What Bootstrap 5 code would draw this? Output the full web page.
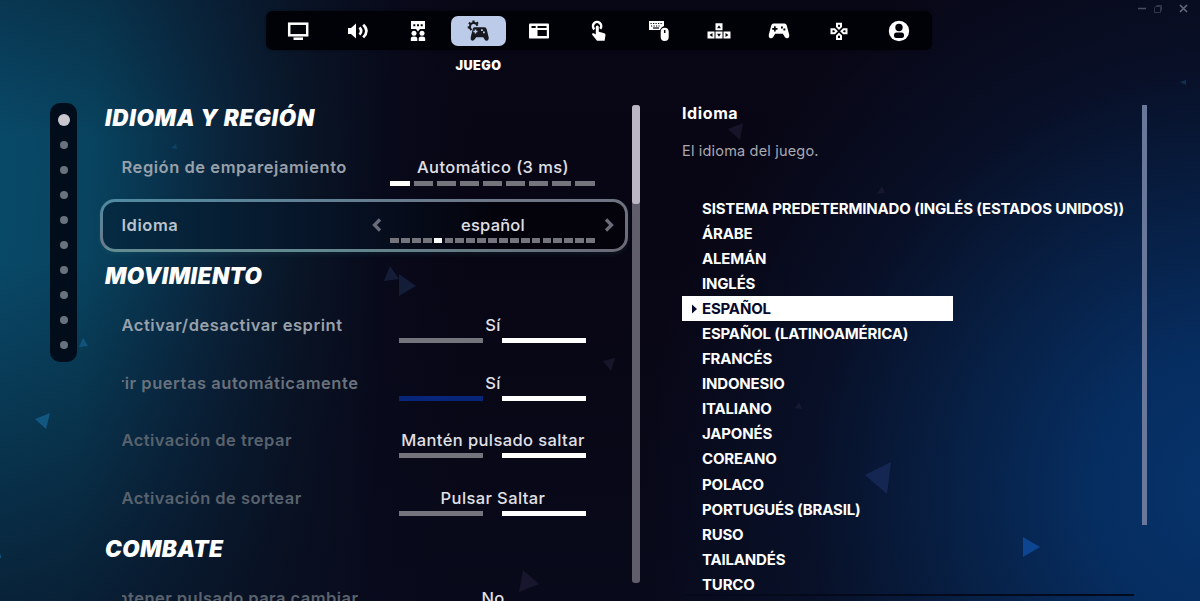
<!DOCTYPE html>
<html lang="es">
<head>
<meta charset="utf-8">
<meta name="viewport" content="width=device-width, initial-scale=1">
<title>Ajustes del juego</title>
<link href="https://cdn.jsdelivr.net/npm/bootstrap@5.3.0/dist/css/bootstrap.min.css" rel="stylesheet">
<style>
html{overflow:hidden}
body{font-family:Inter,"Noto Sans",sans-serif;height:601px;overflow:hidden;color:#fff;
 background:
 radial-gradient(ellipse 560px 570px at 1230px 490px,#06346c 0%,rgba(6,48,102,.92) 25%,rgba(7,40,85,.72) 50%,rgba(8,24,56,.5) 75%,rgba(8,6,20,0) 105%),
 linear-gradient(180deg,rgba(8,10,26,.3) 0,rgba(8,10,26,0) 23%,rgba(8,10,26,0) 43%,rgba(8,12,30,.62) 100%),
 linear-gradient(93deg,#084a69 0,#08435f 100px,#09304a 180px,#0a2036 250px,#091425 320px,#08091a 400px,#080614 480px)}
.shards{left:0;top:0;z-index:0}
.window-ctl{right:11px;top:3px}
.topbar{width:666px;height:39px;margin-top:11px;margin-left:266px;padding:0 0 0 2px;background:#010208;border-radius:7px;box-shadow:0 0 3px rgba(1,2,8,.5)}
.topbar .tab{width:60.15px;height:30px;flex:none}
.tab.on span{width:55px;height:30px;border-radius:7px;background:#bccbe8}
.tab-title{width:120px;margin-left:418.5px;height:30px;font-size:12.6px;font-weight:900;line-height:32px;letter-spacing:.5px}
.content{height:520px;margin-top:10px}
.dots{width:27px;height:259px;margin:13px 0 0 50px;border-radius:10px;background:#020d1c;padding:4px 0}
.dots div{height:25.1px}
.dots i{width:8px;height:8px;border-radius:50%;background:#67727d}
.dots .now{width:12px;height:12px;background:#c9c7ce}
.panel-l{width:527px;margin:7px 0 0 24px}
.grp{height:42px;line-height:43.4px;padding-left:4px;font-size:22.4px;font-weight:900;font-style:italic;letter-spacing:.42px}
.grp.wide{letter-spacing:.73px;line-height:42.4px}
.opt{height:57.7px;padding-left:20.5px}
.lbl{width:237px;font-size:16.5px;font-weight:600;color:#98a0aa;overflow:hidden;white-space:nowrap;letter-spacing:.54px}
.dim1{color:#68717c}.dim2{color:#59626d;letter-spacing:.46px}
.val{width:220px;margin-left:24.5px;height:100%;font-size:16.5px;font-weight:500;color:#e0e0e6;white-space:nowrap;letter-spacing:.4px}
.bars{bottom:11px;left:-.5px;right:.5px;height:5px}
.bars b{height:5px;background:#74747d}
.bars .hit{background:#fff}
.two b{width:84px}.two{gap:19.5px}
.nine b{width:19.3px}.nine{gap:3.8px}
.many b{width:8.8px}.many{gap:2.1px}
.bars .changed{background:#07267a}
.picked{border:3px solid transparent;height:53px;margin:2.2px 0 2.5px -1px;border-radius:15px;padding-left:18.5px;
 background:linear-gradient(90deg,#052b43,#071225 45%,#04030c 75%) padding-box,
 linear-gradient(172deg,#4f8ba2,#6f7787 45%,#6b6976 100%) border-box;box-shadow:0 2px 5px rgba(60,140,140,.14)}
.picked:after{content:"";position:absolute;inset:-3px;border-radius:15px;border:3px solid transparent;border-bottom-color:rgba(85,165,160,.45);-webkit-mask:linear-gradient(90deg,#000 40%,transparent);mask:linear-gradient(90deg,#000 40%,transparent)}
.picked .lbl{color:#b9c4cf}
.picked .val{letter-spacing:.2px}
.picked .bars{bottom:5.7px}
.arrow{top:16.500px}
.arrow.l{left:-12px}.arrow.r{right:-12px}
.scroll-l{width:8.5px;height:478px;margin:15px 0 0 3.5px;background:#605e6b;border-radius:3px}
.scroll-l div{height:99px;background:#bab6c2;border-radius:3px}
.panel-r{width:452px;margin:10px 0 0 42px}
.r-title{font-size:16px;font-weight:700;line-height:26px;letter-spacing:.6px}
.r-text{font-size:14.5px;color:#a9a9b1;line-height:22px;margin-top:13.8px;letter-spacing:.18px}
.langs{margin-top:34.2px;font-size:15px;font-weight:700;line-height:25.05px;letter-spacing:-.18px}
.langs li{height:25.05px;padding-left:20px;white-space:nowrap}
.langs .sel{width:270.5px;background:#fff;color:#07092c}
.sel svg{left:9px;top:7.5px}
.rule{height:2px;background:#040a1c;margin-top:-3px}
.scroll-r{width:4.5px;height:420px;margin:15px 0 0 8px;background:#68779a}
</style>
</head>
<body>
<svg class="shards position-absolute" width="1200" height="601">
 <g fill="#14608d">
  <path d="M35 419l15-6-4 16z" opacity=".8"/><path d="M83 338l5 8-9 1z" opacity=".7"/><path d="M176 144l1 5-6-1z" opacity=".4"/>
 </g>
 <g fill="#1d2c4c" opacity=".75"><path d="M390 266l9 13-15 2z" opacity=".8"/><path d="M399 274l17 12-17 10z" opacity=".8"/></g>
 <g fill="#24213d" opacity=".55"><path d="M523 570l16 14-20 8z"/><path d="M603 361l12-3-4 13z"/><path d="M728 129l15-6-3 17z"/><path d="M882 186l3 7-8 1z"/><path d="M799 402l3 7-7-1z"/></g>
 <path d="M865 475l26-13-4 32z" fill="#1a2b5c" opacity=".75"/>
 <path d="M1023 537l17 10-17 10z" fill="#0e4590"/>
 <path d="M0 553l1 5H0z" fill="#14608d"/><path d="M1180 82l6-2v5z" fill="#12304f"/>
</svg>
<svg class="window-ctl position-absolute" width="51" height="12" fill="none" stroke="#4b4d60"><path d="M0 5.500h8" stroke-width="1.500"/><path d="M17.500 3.500h5v6h-6v-5zM18.500 2.500h5v5" stroke="#34364b"/><path d="M42 2l7 7m0-7l-7 7" stroke="#65677a" stroke-width="1.700"/></svg>

<nav class="topbar d-flex align-items-center position-relative">
 <div class="tab d-flex justify-content-center align-items-center"><svg width="24" height="24" fill="none" stroke="#fff"><rect x="3.200" y="4.700" width="18" height="11.600" stroke-width="2.500"/><path d="M7.500 19.700h9.500" stroke-width="2.600"/></svg></div>
 <div class="tab d-flex justify-content-center align-items-center"><svg width="24" height="24" fill="#fff"><path d="M2 9h3l5-4.500v15L5 15H2z"/><path d="M13.500 8.500q3.300 3.500 0 7.200M17.200 5.800q6.500 6.200 0 12.600" fill="none" stroke="#fff" stroke-width="2.700"/></svg></div>
 <div class="tab d-flex justify-content-center align-items-center"><svg width="24" height="24" fill="#fff"><path fill-rule="evenodd" d="M5 2h14v8h-5l-2 2.500L10 10H5zM7.300 5.200v2h2v-2zM11 5.200v2h2v-2zM14.700 5.200v2h2v-2z"/><circle cx="8" cy="14.300" r="2.500"/><circle cx="16" cy="14.300" r="2.500"/><path d="M4.800 22v-2.500q0-2 3.200-2t3.300 2V22zM12.700 22v-2.500q0-2 3.200-2t3.300 2V22z"/></svg></div>
 <div class="tab on d-flex justify-content-center align-items-center"><span class="d-flex justify-content-center align-items-center"><svg width="24" height="24" fill="#17181f"><path d="M5.300 11.200L3.700 8.300l1-3.100 2.800-1.500 2.800 1 1.200 2" fill="none" stroke="#17181f" stroke-width="2"/><path d="M3.700 8.300l-2 .2M4.700 5.200L3 3.600M7.500 3.700V1.500M10.300 4.700l1.700-1.500" stroke="#17181f" stroke-width="2.200"/><path fill-rule="evenodd" d="M8.500 8.300h10q1.700.2 2.200 2l2 8.200q.2 3-2 3.200-1.500 0-2.200-1.500l-1.300-2h-7l-1.500 2q-1 1.700-2.500 1.400-2-.5-1.500-3.400l2-8q.5-1.800 1.800-1.900zM8.700 10.500v1.300H7.400v1.500h1.300v1.300h1.500v-1.300h1.300v-1.500h-1.300v-1.300zM15 10.300v1.800h1.800v-1.800zM17 12.500v1.800h1.800v-1.800z"/></svg></span></div>
 <div class="tab d-flex justify-content-center align-items-center"><svg width="24" height="24"><rect x="2" y="4.500" width="20" height="15" rx="1" fill="#fff"/><path d="M4.500 7h4.200v2H4.500zM10.500 7h9v2h-9zM10.500 11h9.300v6h-9.300z" fill="#010208"/></svg></div>
 <div class="tab d-flex justify-content-center align-items-center"><svg width="24" height="24"><path d="M7.400 10.200a4.100 4.100 0 1 1 5.800-.4" fill="none" stroke="#fff" stroke-width="2.500"/><path d="M8.800 8q0-1.500 1.500-1.500T11.800 8v4.800l5.500 1.400q1.300.4 1.200 1.800l-.9 5.800H10l-4.800-6q-.7-1.200.5-1.600 1.300-.2 3.100 1.300z" fill="#fff"/></svg></div>
 <div class="tab d-flex justify-content-center align-items-center"><svg width="24" height="24"><path d="M2 2h15v5q-3 1-4 4H2z" fill="#fff"/><path d="M3.500 4.500h12M4 7h9" stroke="#010208" stroke-width="1.200" stroke-dasharray="1.200 1.300"/><path d="M6 9h6" stroke="#010208" stroke-width="1.200"/><rect x="13.700" y="8.700" width="8" height="13.300" rx="4" fill="#fff"/><path d="M17.700 11v3" stroke="#010208" stroke-width="1.500"/></svg></div>
 <div class="tab d-flex justify-content-center align-items-center"><svg width="24" height="24"><path d="M8.500 4.300h7v7h-7zM.500 12.500h7v7h-7zM8.500 12.500h7v7h-7zM16.500 12.500h7v7h-7z" fill="#fff"/><path d="M12 6.300l1.900 3h-3.800zM12 17.800l1.900-3h-3.800zM2.500 16l3-1.900v3.800zM21.500 16l-3-1.900v3.800z" fill="#010208"/></svg></div>
 <div class="tab d-flex justify-content-center align-items-center"><svg width="24" height="24"><path fill="#fff" fill-rule="evenodd" d="M6.500 4.500h11q1.700 0 2.200 1.800l2.500 9.500q.5 3.300-2.200 3.500-1.500 0-2.200-1.300l-2-3.200H8.200l-2 3.200q-1 1.500-2.500 1.300-2.300-.3-1.900-3.500l2.500-9.500q.5-1.800 2.200-1.800zM7 7.200V9H5.200v1.700H7v1.800h1.700v-1.800h1.800V9H8.700V7.200zM14 7.500v1.900h1.900V7.500zM16.400 9.500v1.900h1.900V9.500z"/></svg></div>
 <div class="tab d-flex justify-content-center align-items-center"><svg width="24" height="24" fill="none" stroke="#fff" stroke-width="2"><path d="M10 4.700h4v3l-2 2-2-2zM10 19.900h4v-3l-2-2-2 2zM4.500 10.300v4h3l2-2-2-2zM19.500 10.300v4h-3l-2-2 2-2z"/></svg></div>
 <div class="tab d-flex justify-content-center align-items-center"><svg width="24" height="24"><circle cx="12" cy="12" r="10.200" fill="#fff"/><circle cx="12" cy="8.500" r="3.700" fill="#010208"/><rect x="7" y="13.500" width="10" height="5.500" rx="2.500" fill="#010208"/></svg></div>
</nav>
<div class="tab-title text-center position-relative">JUEGO</div>

<main class="content d-flex align-items-start position-relative">
 <div class="dots">
  <div class="d-flex justify-content-center align-items-center"><i class="now"></i></div>
  <div class="d-flex justify-content-center align-items-center"><i></i></div><div class="d-flex justify-content-center align-items-center"><i></i></div><div class="d-flex justify-content-center align-items-center"><i></i></div><div class="d-flex justify-content-center align-items-center"><i></i></div><div class="d-flex justify-content-center align-items-center"><i></i></div><div class="d-flex justify-content-center align-items-center"><i></i></div><div class="d-flex justify-content-center align-items-center"><i></i></div><div class="d-flex justify-content-center align-items-center"><i></i></div><div class="d-flex justify-content-center align-items-center"><i></i></div>
 </div>

 <section class="panel-l">
  <div class="grp wide">IDIOMA Y REGIÓN</div>
  <div class="opt d-flex align-items-center"><div class="lbl">Región de emparejamiento</div>
   <div class="val position-relative d-flex align-items-center justify-content-center"><span>Automático (3 ms)</span><div class="bars nine position-absolute d-flex justify-content-center"><b class="hit"></b><b></b><b></b><b></b><b></b><b></b><b></b><b></b><b></b></div></div></div>
  <div class="opt picked position-relative d-flex align-items-center"><div class="lbl">Idioma</div>
   <div class="val position-relative d-flex align-items-center justify-content-center"><svg class="arrow l position-absolute" width="12" height="14" fill="none" stroke="#6a6c79" stroke-width="3.200"><path d="M9 1.500L3.500 7 9 12.500"/></svg><span>español</span><svg class="arrow r position-absolute" width="12" height="14" fill="none" stroke="#6a6c79" stroke-width="3.200"><path d="M3 1.500L8.500 7 3 12.500"/></svg><div class="bars many position-absolute d-flex justify-content-center"><b></b><b></b><b></b><b></b><b class="hit"></b><b></b><b></b><b></b><b></b><b></b><b></b><b></b><b></b><b></b><b></b><b></b><b></b><b></b><b></b></div></div></div>
  <div class="grp">MOVIMIENTO</div>
  <div class="opt d-flex align-items-center"><div class="lbl">Activar/desactivar esprint</div>
   <div class="val position-relative d-flex align-items-center justify-content-center"><span>Sí</span><div class="bars two position-absolute d-flex justify-content-center"><b></b><b class="hit"></b></div></div></div>
  <div class="opt d-flex align-items-center"><div class="lbl dim1 d-flex justify-content-end"><span>Abrir puertas automáticamente</span></div>
   <div class="val position-relative d-flex align-items-center justify-content-center"><span>Sí</span><div class="bars two position-absolute d-flex justify-content-center"><b class="changed"></b><b class="hit"></b></div></div></div>
  <div class="opt d-flex align-items-center"><div class="lbl dim2">Activación de trepar</div>
   <div class="val position-relative d-flex align-items-center justify-content-center"><span>Mantén pulsado saltar</span><div class="bars two position-absolute d-flex justify-content-center"><b></b><b class="hit"></b></div></div></div>
  <div class="opt d-flex align-items-center"><div class="lbl dim2">Activación de sortear</div>
   <div class="val position-relative d-flex align-items-center justify-content-center"><span>Pulsar Saltar</span><div class="bars two position-absolute d-flex justify-content-center"><b></b><b class="hit"></b></div></div></div>
  <div class="grp">COMBATE</div>
  <div class="opt d-flex align-items-center"><div class="lbl dim2 d-flex justify-content-end"><span class="me-n1">Mantener pulsado para cambiar</span></div>
   <div class="val position-relative d-flex align-items-center justify-content-center"><span>No</span></div></div>
 </section>
 <div class="scroll-l"><div></div></div>

 <section class="panel-r">
  <div class="r-title">Idioma</div>
  <div class="r-text">El idioma del juego.</div>
  <ul class="langs list-unstyled mb-0">
   <li>SISTEMA PREDETERMINADO (INGLÉS (ESTADOS UNIDOS))</li><li>ÁRABE</li><li>ALEMÁN</li><li>INGLÉS</li>
   <li class="sel position-relative"><svg class="position-absolute" width="7" height="10" fill="#07092c"><path d="M1 .500L6 5 1 9.500z"/></svg>ESPAÑOL</li>
   <li>ESPAÑOL (LATINOAMÉRICA)</li><li>FRANCÉS</li><li>INDONESIO</li><li>ITALIANO</li><li>JAPONÉS</li><li>COREANO</li><li>POLACO</li><li>PORTUGUÉS (BRASIL)</li><li>RUSO</li><li>TAILANDÉS</li><li>TURCO</li>
  </ul>
  <div class="rule"></div>
 </section>
 <div class="scroll-r"></div>
</main>
<script src="https://cdn.jsdelivr.net/npm/bootstrap@5.3.0/dist/js/bootstrap.bundle.min.js"></script>
</body>
</html>
